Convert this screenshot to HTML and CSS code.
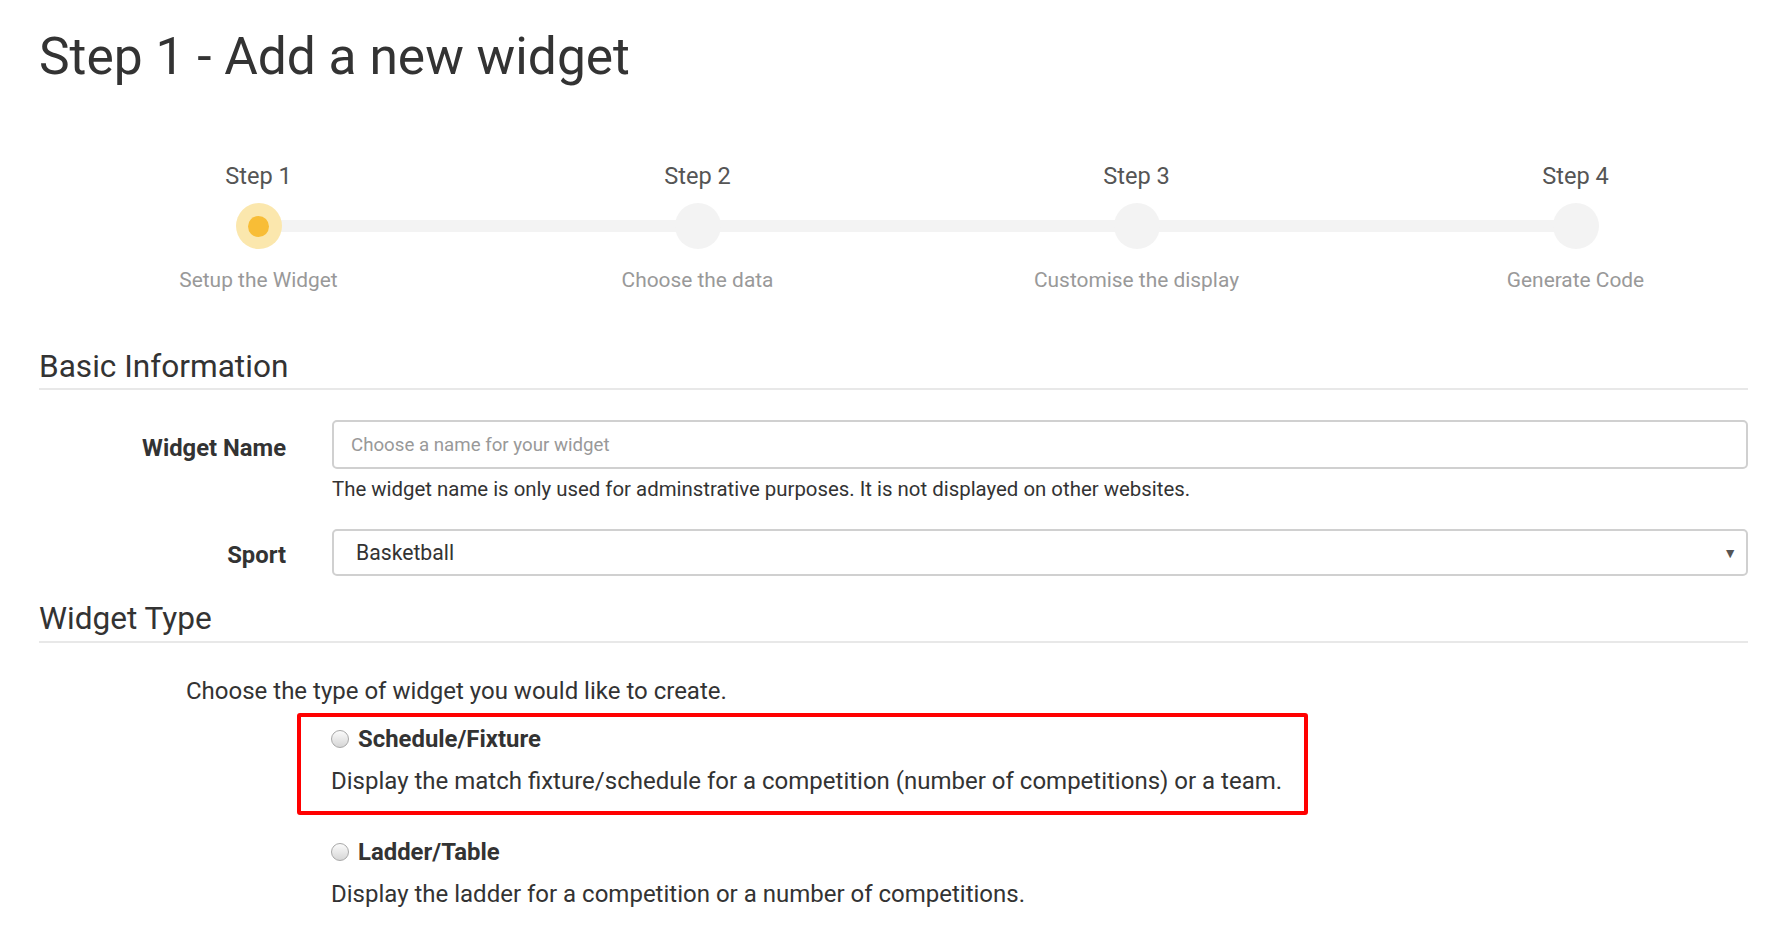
FILE: index.html
```html
<!DOCTYPE html>
<html lang="en">
<head>
<meta charset="utf-8">
<title>Step 1 - Add a new widget</title>
<link rel="stylesheet" href="styles.css">
</head>
<body>
<div class="page">
  <h1 class="title">Step 1 - Add a new widget</h1>

  <div class="steps">
    <div class="step active">
      <div class="step-name">Step 1</div>
      <div class="step-dot"><span class="step-core"></span></div>
      <div class="step-desc">Setup the Widget</div>
    </div>
    <div class="step">
      <div class="step-name">Step 2</div>
      <div class="step-dot"></div>
      <div class="step-desc">Choose the data</div>
    </div>
    <div class="step">
      <div class="step-name">Step 3</div>
      <div class="step-dot"></div>
      <div class="step-desc">Customise the display</div>
    </div>
    <div class="step">
      <div class="step-name">Step 4</div>
      <div class="step-dot"></div>
      <div class="step-desc">Generate Code</div>
    </div>
  </div>

  <h2 class="section-title">Basic Information</h2>

  <div class="form-row">
    <label class="form-label" for="wname">Widget Name</label>
    <div class="form-field">
      <input class="form-input" id="wname" type="text" placeholder="Choose a name for your widget">
      <p class="help">The widget name is only used for adminstrative purposes. It is not displayed on other websites.</p>
    </div>
  </div>

  <div class="form-row sport-row">
    <label class="form-label" for="sport">Sport</label>
    <div class="form-field">
      <div class="select" id="sport">
        <span>Basketball</span>
        <span class="caret">&#9660;</span>
      </div>
    </div>
  </div>

  <h2 class="section-title type-title">Widget Type</h2>

  <div class="type-section">
    <p class="intro">Choose the type of widget you would like to create.</p>
    <div class="option highlighted">
      <div class="option-head"><span class="radio"></span><span class="option-name">Schedule/Fixture</span></div>
      <p class="option-text">Display the match fixture/schedule for a competition (number of competitions) or a team.</p>
    </div>
    <div class="option">
      <div class="option-head"><span class="radio"></span><span class="option-name">Ladder/Table</span></div>
      <p class="option-text">Display the ladder for a competition or a number of competitions.</p>
    </div>
  </div>
</div>
</body>
</html>
```

FILE: styles.css
```css
html, body {
  margin: 0;
  padding: 0;
  background: #ffffff;
  overflow: hidden;
}

body {
  font-family: Roboto, "Liberation Sans", Arial, sans-serif;
  color: #333333;
}

.page {
  padding: 0 18px 0 39px;
  width: 1709px;
}

.title {
  margin: 0;
  padding-top: 29px;
  font-size: 51.5px;
  line-height: 56px;
  font-weight: 400;
  color: #333333;
}

/* steps */
.steps {
  position: relative;
  display: grid;
  grid-template-columns: repeat(4, 439px);
  margin-top: 77px;
  width: 1756px;
}

.steps::before {
  content: "";
  position: absolute;
  left: 219px;
  width: 1317px;
  top: 58px;
  height: 12px;
  background: #f3f3f3;
}

.step {
  position: relative;
  display: flex;
  flex-direction: column;
  align-items: center;
}

.step-name {
  font-size: 23.6px;
  line-height: 28px;
  color: #555555;
}

.step-dot {
  margin-top: 13px;
  width: 46px;
  height: 46px;
  border-radius: 50%;
  background: #f3f3f3;
  display: flex;
  align-items: center;
  justify-content: center;
}

.step.active .step-dot {
  background: #fbe7ad;
}

.step-core {
  width: 21px;
  height: 21px;
  border-radius: 50%;
  background: #f8bd36;
}

.step-desc {
  margin-top: 19px;
  font-size: 20.9px;
  line-height: 24px;
  color: #999999;
}

/* sections */
.section-title {
  margin: 57px 0 0;
  padding-bottom: 3px;
  border-bottom: 2px solid #e8e8e8;
  font-size: 31.6px;
  line-height: 36px;
  font-weight: 400;
  color: #333333;
}

.form-row {
  display: grid;
  grid-template-columns: 247px 1fr;
  column-gap: 46px;
  margin-top: 30px;
}

.sport-row {
  margin-top: 28px;
}

.form-label {
  padding-top: 3px;
  text-align: right;
  font-weight: 700;
  font-size: 23.8px;
  line-height: 50px;
  color: #333333;
}

.sport-row .form-label {
  padding-top: 1px;
}

.form-input {
  display: block;
  box-sizing: border-box;
  width: 100%;
  height: 49px;
  margin: 0;
  padding: 0 17px;
  border: 2px solid #d0d0d0;
  border-radius: 5px;
  font-family: inherit;
  font-size: 18.7px;
  color: #333333;
  background: #ffffff;
  outline: none;
}

.form-input::placeholder {
  color: #999999;
}

.help {
  margin: 8px 0 0;
  font-size: 20.4px;
  line-height: 24px;
  color: #333333;
}

.select {
  box-sizing: border-box;
  height: 47px;
  border: 2px solid #d0d0d0;
  border-radius: 5px;
  display: flex;
  align-items: center;
  justify-content: space-between;
  padding: 0 9px 0 22px;
  font-size: 21.2px;
  color: #333333;
}

.caret {
  font-size: 14px;
  color: #555555;
}

.section-title.type-title {
  margin-top: 21px;
  padding-bottom: 4px;
}

.type-section {
  padding-left: 147px;
}

.intro {
  margin: 34px 0 0;
  font-size: 24px;
  line-height: 28px;
  color: #333333;
}

.option {
  margin-left: 111px;
  margin-top: 11px;
  width: fit-content;
  padding: 8px 22px 14px 30px;
  border: 4px solid transparent;
  border-radius: 3px;
}

.option.highlighted {
  margin-top: 8px;
  padding-top: 8px;
  padding-bottom: 16px;
  border-color: #ff0000;
}

.option-head {
  display: flex;
  align-items: center;
  gap: 9px;
}

.radio {
  box-sizing: border-box;
  width: 18px;
  height: 18px;
  border-radius: 50%;
  border: 1px solid #a8a8a8;
  background: linear-gradient(#fbfbfb, #d6d6d6);
}

.option-name {
  font-weight: 700;
  font-size: 23.9px;
  line-height: 28px;
  color: #333333;
}

.option-text {
  margin: 14px 0 0;
  font-size: 24px;
  line-height: 28px;
  color: #333333;
}
```
